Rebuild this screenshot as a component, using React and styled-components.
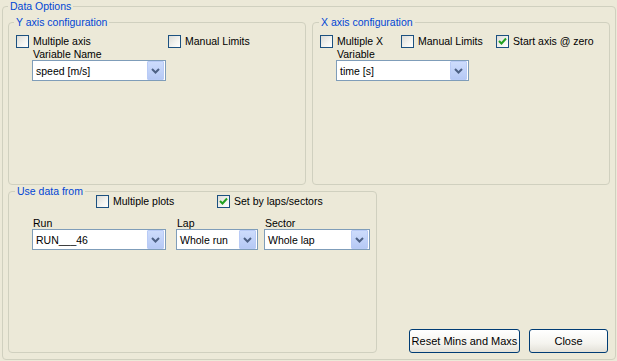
import React from 'react';
import styled, { createGlobalStyle } from 'styled-components';

const GlobalStyle = createGlobalStyle`
  html, body {
    margin: 0;
    padding: 0;
    background: #ece9d8;
  }
  body {
    font-family: "Liberation Sans", Arial, sans-serif;
    font-size: 10.5px;
    color: #000;
  }
`;

const Window = styled.div`
  width: 617px;
  height: 361px;
  padding: 0 1px 0 2px;
  box-sizing: border-box;
`;

const Group = styled.fieldset`
  margin: 0;
  padding: ${({ $pad }) => $pad || '0'};
  min-width: 0;
  box-sizing: border-box;
  border: 1px solid #d0d0bf;
  border-radius: 4px;
  width: ${({ $w }) => $w}px;
  height: ${({ $h }) => $h}px;
  flex: none;
`;

const Caption = styled.legend`
  margin-left: ${({ $indent }) => $indent || 0}px;
  padding: 0 2px;
  color: #0046d5;
  line-height: 13px;
`;

const Stack = styled.div`
  display: flex;
  flex-direction: column;
  height: 100%;
  justify-content: space-between;
`;

const TopRow = styled.div`
  display: flex;
  gap: 6px;
`;

const BottomRow = styled.div`
  display: flex;
  align-items: flex-end;
  justify-content: space-between;
`;

const GroupBody = styled.div`
  padding: ${({ $pad }) => $pad};
`;

const CheckRow = styled.div`
  display: flex;
  margin-top: ${({ $top }) => $top || 0}px;
  padding-left: ${({ $left }) => $left || 0}px;
`;

const CheckItem = styled.label`
  display: flex;
  align-items: center;
  gap: 4px;
  height: 13px;
  line-height: 13px;
  width: ${({ $w }) => ($w ? `${$w}px` : 'auto')};
  white-space: nowrap;
`;

const Box = styled.span`
  width: 13px;
  height: 13px;
  box-sizing: border-box;
  border: 1px solid #1c5180;
  background: linear-gradient(135deg, #dcdcd7 0%, #f4f4f0 60%, #ffffff 100%);
  display: flex;
  align-items: center;
  justify-content: center;
  flex: none;
`;

const FieldRow = styled.div`
  display: flex;
  gap: ${({ $gap }) => $gap || 0}px;
  margin-top: ${({ $top }) => $top || 0}px;
  margin-left: ${({ $left }) => $left || 0}px;
`;

const Field = styled.div`
  display: flex;
  flex-direction: column;
  width: ${({ $w }) => $w}px;
`;

const FieldLabel = styled.div`
  line-height: 12px;
  padding-left: 1px;
  white-space: nowrap;
`;

const Combo = styled.div`
  display: flex;
  align-items: center;
  height: 21px;
  box-sizing: border-box;
  border: 1px solid #7f9db9;
  background: #fff;
`;

const ComboText = styled.span`
  flex: 1;
  padding-left: 3px;
  white-space: nowrap;
  overflow: hidden;
`;

const ComboButton = styled.span`
  width: 17px;
  height: 19px;
  margin-right: 1px;
  box-sizing: border-box;
  border: 1px solid #b9cbf6;
  border-radius: 1px;
  background: linear-gradient(#cddcfc, #b6c9f5);
  display: flex;
  align-items: center;
  justify-content: center;
`;

const Buttons = styled.div`
  display: flex;
  gap: 9px;
  margin-right: 2px;
`;

const PushButton = styled.button`
  width: ${({ $w }) => $w}px;
  height: 24px;
  box-sizing: border-box;
  border: 1px solid #003c74;
  border-radius: 3px;
  background: linear-gradient(#ffffff 0%, #f5f4ef 60%, #e3e1d8 100%);
  font-family: inherit;
  font-size: 11px;
  color: #000;
  padding: 0;
  white-space: nowrap;
`;

function Check({ label, checked, w }) {
  return (
    <CheckItem $w={w}>
      <Box>
        {checked && (
          <svg width="9" height="9" viewBox="0 0 9 9">
            <path d="M1 4 L3.5 6.5 L8 1.5" fill="none" stroke="#21a121" strokeWidth="2" />
          </svg>
        )}
      </Box>
      {label}
    </CheckItem>
  );
}

function Dropdown({ label, value, w }) {
  return (
    <Field $w={w}>
      <FieldLabel>{label}</FieldLabel>
      <Combo>
        <ComboText>{value}</ComboText>
        <ComboButton>
          <svg width="9" height="6" viewBox="0 0 9 6">
            <path d="M1 1 L4.5 4.5 L8 1" fill="none" stroke="#4d6185" strokeWidth="2" />
          </svg>
        </ComboButton>
      </Combo>
    </Field>
  );
}

export default function App() {
  return (
    <Window>
      <GlobalStyle />
      <Group $w={614} $h={360} $pad="3px 5px 6px 5px">
        <Caption>Data Options</Caption>
        <Stack>
          <TopRow>
            <Group $w={298} $h={169}>
              <Caption $indent={5}>Y axis configuration</Caption>
              <GroupBody $pad="6px 0 0 7px">
                <CheckRow>
                  <Check label="Multiple axis" w={152} />
                  <Check label="Manual Limits" />
                </CheckRow>
                <FieldRow $left={16}>
                  <Dropdown label="Variable Name" value="speed [m/s]" w={134} />
                </FieldRow>
              </GroupBody>
            </Group>
            <Group $w={298} $h={169}>
              <Caption $indent={6}>X axis configuration</Caption>
              <GroupBody $pad="6px 0 0 7px">
                <CheckRow>
                  <Check label="Multiple X" w={81} />
                  <Check label="Manual Limits" w={95} />
                  <Check label="Start axis @ zero" checked />
                </CheckRow>
                <FieldRow $left={16}>
                  <Dropdown label="Variable" value="time [s]" w={133} />
                </FieldRow>
              </GroupBody>
            </Group>
          </TopRow>
          <BottomRow>
            <Group $w={369} $h={168}>
              <Caption $indent={6}>Use data from</Caption>
              <GroupBody $pad="0 0 0 23px">
                <CheckRow $top={-3} $left={64}>
                  <Check label="Multiple plots" w={121} />
                  <Check label="Set by laps/sectors" checked />
                </CheckRow>
                <FieldRow $top={9} $gap={10}>
                  <Dropdown label="Run" value="RUN___46" w={134} />
                  <FieldRow $gap={6}>
                    <Dropdown label="Lap" value="Whole run" w={82} />
                    <Dropdown label="Sector" value="Whole lap" w={106} />
                  </FieldRow>
                </FieldRow>
              </GroupBody>
            </Group>
            <Buttons>
              <PushButton $w={111}>Reset Mins and Maxs</PushButton>
              <PushButton $w={79}>Close</PushButton>
            </Buttons>
          </BottomRow>
        </Stack>
      </Group>
    </Window>
  );
}
